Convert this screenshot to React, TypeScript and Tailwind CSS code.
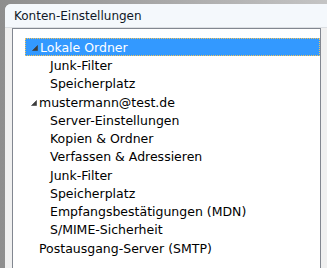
const Expander = () => (
  <svg width="6" height="6" viewBox="0 0 6 6" className="shrink-0 mt-[2px]">
    <polygon points="5.5,0.5 5.5,5.5 0.5,5.5" fill="#3c3c3c" stroke="#3c3c3c" strokeWidth="0.6" />
  </svg>
);

type Row = { label: string; level: 0 | 1; expander?: boolean; selected?: boolean };

const rows: Row[] = [
  { label: "Lokale Ordner", level: 0, expander: true, selected: true },
  { label: "Junk-Filter", level: 1 },
  { label: "Speicherplatz", level: 1 },
  { label: "mustermann@test.de", level: 0, expander: true },
  { label: "Server-Einstellungen", level: 1 },
  { label: "Kopien & Ordner", level: 1 },
  { label: "Verfassen & Adressieren", level: 1 },
  { label: "Junk-Filter", level: 1 },
  { label: "Speicherplatz", level: 1 },
  { label: "Empfangsbestätigungen (MDN)", level: 1 },
  { label: "S/MIME-Sicherheit", level: 1 },
  { label: "Postausgang-Server (SMTP)", level: 0 },
];

export default function App() {
  return (
    <div
      className="w-[327px] h-[268px] overflow-hidden bg-gradient-to-r from-[#8e8e8e] to-[#c4c4c4] pl-[5px] pt-[4px]"
      style={{ fontFamily: '"DejaVu Sans", Verdana, sans-serif' }}
    >
      <div className="h-full bg-[#f0f0f0] rounded-tl-[6px] overflow-hidden flex flex-col">
        {/* Title */}
        <div className="h-[24px] shrink-0 bg-[#f4f8fc] border-b border-[#dcdfe3] flex items-center pl-[9px] text-[12px] text-[#101828]">
          Konten-Einstellungen
        </div>

        {/* Tree */}
        <div className="pl-[7px] flex-1">
          <div className="w-[309px] h-[300px] bg-white border border-[#828790] pl-[12px] pt-[9px] text-[12.5px] text-black">
            {rows.map((row, i) => (
              <div
                key={i}
                className={
                  "h-[18.25px] flex items-center gap-[2px] " +
                  (row.level === 0 ? "pl-[6px] " : "pl-[25px] ") +
                  (row.selected
                    ? "bg-[#3399ff] text-white border border-dotted border-[#f2c45a] pl-[5px]"
                    : "")
                }
              >
                {row.expander && <Expander />}
                {!row.expander && row.level === 0 && <span className="w-[6px] shrink-0" />}
                <span className="leading-none whitespace-nowrap pt-[2px]">{row.label}</span>
              </div>
            ))}
          </div>
        </div>
      </div>
    </div>
  );
}
